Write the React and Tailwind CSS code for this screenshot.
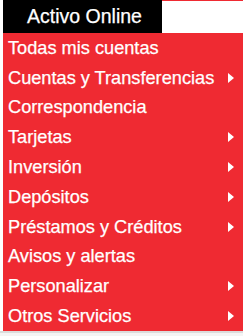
import React from "react";

const items = [
  { label: "Todas mis cuentas", sub: false },
  { label: "Cuentas y Transferencias", sub: true },
  { label: "Correspondencia", sub: false },
  { label: "Tarjetas", sub: true },
  { label: "Inversión", sub: true },
  { label: "Depósitos", sub: true },
  { label: "Préstamos y Créditos", sub: true },
  { label: "Avisos y alertas", sub: false },
  { label: "Personalizar", sub: true },
  { label: "Otros Servicios", sub: true },
];

const Arrow = () => (
  <svg width="6" height="10" viewBox="0 0 6 10" className="block">
    <path d="M0 0 L6 5 L0 10 Z" fill="#ffffff" />
  </svg>
);

export default function App() {
  return (
    <div
      className="w-[243px] h-[336px] bg-white overflow-hidden flex flex-col"
      style={{ fontFamily: '"Liberation Sans", Arial, sans-serif' }}
    >
      <div className="pl-[3px] flex flex-col">
        {/* tab header */}
        <div className="flex h-[33px]">
          <div className="w-[159px] bg-black text-white text-[19.5px] flex items-center justify-center pl-[4px] leading-none [-webkit-text-stroke:0.25px_#fff]">
            Activo Online
          </div>
          <div className="flex-1 border-t border-[#ef2a32]" />
        </div>

        {/* menu */}
        <div className="bg-[#ef2a32] flex flex-col h-[298px]">
          {items.map((it) => (
            <div
              key={it.label}
              className="flex-1 flex items-center justify-between pl-[5px] pr-[9px] text-white text-[18.2px] leading-none [-webkit-text-stroke:0.25px_#fff]"
            >
              <span>{it.label}</span>
              {it.sub && <Arrow />}
            </div>
          ))}
        </div>
      </div>
      <div className="h-[2px] bg-[#dcdcdc]" />
      <div className="flex-1 bg-[#f4f4f4]" />
    </div>
  );
}
